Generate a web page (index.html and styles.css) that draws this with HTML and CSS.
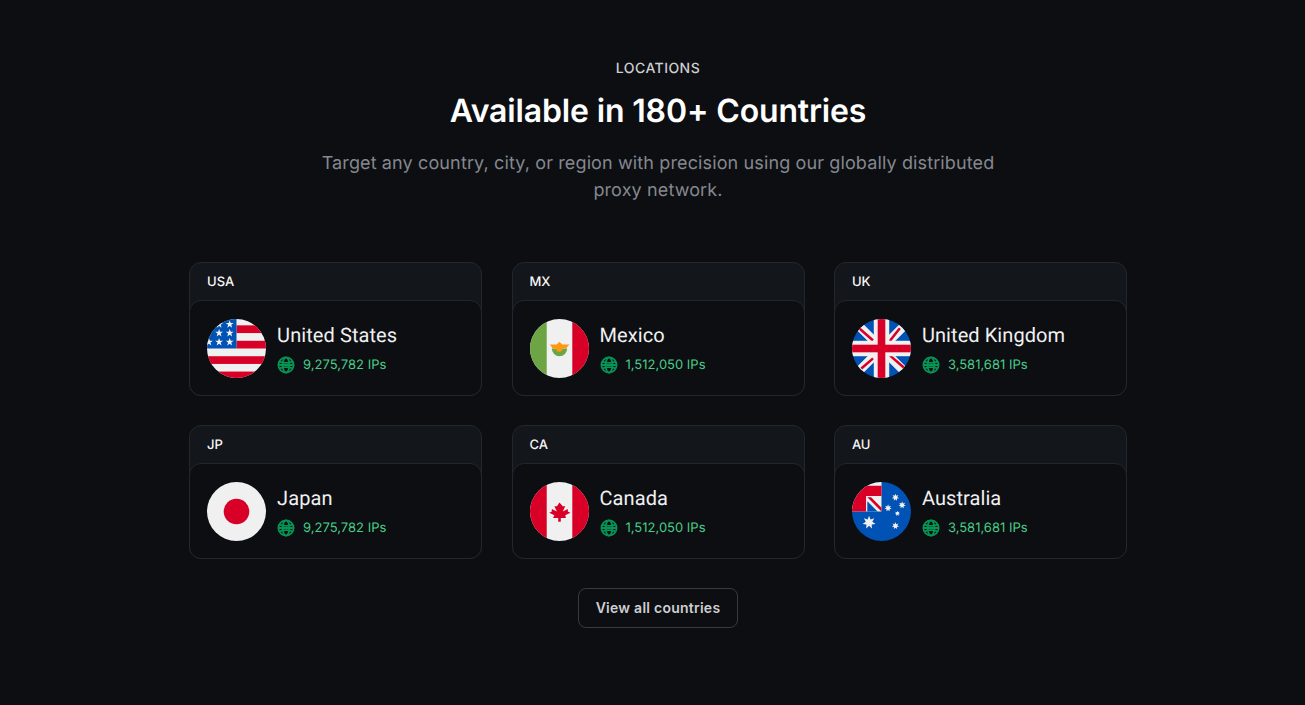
FILE: index.html
```html
<!DOCTYPE html>
<html lang="en">
<head>
  <meta charset="UTF-8">
  <meta name="viewport" content="width=device-width, initial-scale=1.0">
  <title>Locations</title>
  <link rel="stylesheet" href="styles.css">
</head>
<body>
  <!-- shared shapes -->
  <svg class="defs" width="0" height="0" aria-hidden="true">
    <defs>
      <symbol id="globe" viewBox="0 0 18 18">
        <circle cx="9" cy="9" r="7.6"/>
        <ellipse cx="9" cy="9" rx="3.4" ry="7.6"/>
        <path d="M2.4 5.6c4 1.5 9.2 1.5 13.2 0M2.4 12.4c4-1.5 9.2-1.5 13.2 0M1.4 9h15.2"/>
      </symbol>
      <polygon id="star5" points="0,-100 24,-32 95,-31 38,12 59,81 0,40 -59,81 -38,12 -95,-31 -24,-32" fill="#f0f0f0"/>
      <polygon id="star7" points="0,-100 21.7,-45 78.2,-62.3 48.7,-11.1 97.5,22.3 39.1,31.2 43.4,90.1 0,50 -43.4,90.1 -39.1,31.2 -97.5,22.3 -48.7,-11.1 -78.2,-62.3 -21.7,-45" fill="#f0f0f0"/>
    </defs>
  </svg>

  <section class="locations">
    <p class="eyebrow">LOCATIONS</p>
    <h1>Available in 180+ Countries</h1>
    <p class="lead">Target any country, city, or region with precision using our globally distributed proxy network.</p>

    <div class="cards">
      <div class="card">
        <div class="card-code">USA</div>
        <div class="card-body">
          <svg class="flag" viewBox="0 0 512 512">
            <rect width="512" height="512" fill="#f0f0f0"/>
            <g fill="#d80027">
              <rect x="256" y="55" width="256" height="67"/>
              <rect x="256" y="189" width="256" height="67"/>
              <rect y="323" width="512" height="67"/>
              <rect y="456" width="512" height="56"/>
            </g>
            <rect width="256" height="256" fill="#0052b4"/>
            <use href="#star5" transform="translate(197 46) scale(.36)"/>
            <use href="#star5" transform="translate(105 46) scale(.36)"/>
            <use href="#star5" transform="translate(197 122) scale(.36)"/>
            <use href="#star5" transform="translate(105 122) scale(.36)"/>
            <use href="#star5" transform="translate(197 200) scale(.36)"/>
            <use href="#star5" transform="translate(105 200) scale(.36)"/>
            <use href="#star5" transform="translate(17 200) scale(.36)"/>
          </svg>
          <div class="card-info">
            <div class="country">United States</div>
            <div class="ips"><svg class="globe"><use href="#globe"/></svg>9,275,782 IPs</div>
          </div>
        </div>
      </div>

      <div class="card">
        <div class="card-code">MX</div>
        <div class="card-body">
          <svg class="flag" viewBox="0 0 512 512">
            <rect width="512" height="512" fill="#f0f0f0"/>
            <rect width="145" height="512" fill="#6da544"/>
            <rect x="367" width="145" height="512" fill="#d80027"/>
            <path d="M189 256a67 67 0 0 0 134 0z" fill="#6da544"/>
            <path d="M174 222h58l24-25 24 25h62l-30 34h-30a22 22 0 0 1-56 0h-30z" fill="#ff9811"/>
          </svg>
          <div class="card-info">
            <div class="country">Mexico</div>
            <div class="ips"><svg class="globe"><use href="#globe"/></svg>1,512,050 IPs</div>
          </div>
        </div>
      </div>

      <div class="card">
        <div class="card-code">UK</div>
        <div class="card-body">
          <svg class="flag" viewBox="0 0 512 512">
            <rect width="512" height="512" fill="#0052b4"/>
            <path d="M0 0l512 512M512 0L0 512" stroke="#f0f0f0" stroke-width="76"/>
            <path d="M67 84l116 102M328 191l87-110M81 429l102-87M328 316l124 107" stroke="#d80027" stroke-width="22"/>
            <rect x="189" width="134" height="512" fill="#f0f0f0"/>
            <rect y="189" width="512" height="134" fill="#f0f0f0"/>
            <rect x="223" width="66" height="512" fill="#d80027"/>
            <rect y="223" width="512" height="66" fill="#d80027"/>
          </svg>
          <div class="card-info">
            <div class="country">United Kingdom</div>
            <div class="ips"><svg class="globe"><use href="#globe"/></svg>3,581,681 IPs</div>
          </div>
        </div>
      </div>

      <div class="card">
        <div class="card-code">JP</div>
        <div class="card-body">
          <svg class="flag" viewBox="0 0 512 512">
            <rect width="512" height="512" fill="#f0f0f0"/>
            <circle cx="256" cy="256" r="111" fill="#d80027"/>
          </svg>
          <div class="card-info">
            <div class="country">Japan</div>
            <div class="ips"><svg class="globe"><use href="#globe"/></svg>9,275,782 IPs</div>
          </div>
        </div>
      </div>

      <div class="card">
        <div class="card-code">CA</div>
        <div class="card-body">
          <svg class="flag" viewBox="0 0 512 512">
            <rect width="512" height="512" fill="#f0f0f0"/>
            <rect width="145" height="512" fill="#d80027"/>
            <rect x="367" width="145" height="512" fill="#d80027"/>
            <path d="M306.1 289.4l44.5-22.3-22.2-11.1v-22.3l-44.5 22.3 22.2-44.5h-22.2L256 178.1l-22.3 33.4h-22.2l22.2 44.5-44.5-22.3V256l-22.2 11.1 44.5 22.3-11.1 22.2h44.5v33.4h22.3v-33.4h44.5z" fill="#d80027"/>
          </svg>
          <div class="card-info">
            <div class="country">Canada</div>
            <div class="ips"><svg class="globe"><use href="#globe"/></svg>1,512,050 IPs</div>
          </div>
        </div>
      </div>

      <div class="card">
        <div class="card-code">AU</div>
        <div class="card-body">
          <svg class="flag" viewBox="0 0 512 512">
            <rect width="512" height="512" fill="#0052b4"/>
            <rect width="256" height="256" fill="#f0f0f0"/>
            <path d="M0 33h256v89H122v134H0z" fill="#d80027"/>
            <path d="M133 167l89 89h-89z" fill="#0052b4"/>
            <path d="M133 133h33l90 90v33z" fill="#d80027"/>
            <use href="#star7" transform="translate(148 351) scale(.58)"/>
            <use href="#star7" transform="translate(377 133) scale(.32)"/>
            <use href="#star7" transform="translate(313 226) scale(.32)"/>
            <use href="#star7" transform="translate(435 200) scale(.32)"/>
            <use href="#star7" transform="translate(394 273) scale(.24)"/>
            <use href="#star7" transform="translate(377 380) scale(.32)"/>
          </svg>
          <div class="card-info">
            <div class="country">Australia</div>
            <div class="ips"><svg class="globe"><use href="#globe"/></svg>3,581,681 IPs</div>
          </div>
        </div>
      </div>
    </div>

    <button class="view-all">View all countries</button>
  </section>
</body>
</html>
```

FILE: styles.css
```css
body {
  margin: 0;
  background-color: #0c0e12;
  font-family: Inter, "Liberation Sans", sans-serif;
  color: #fff;
  text-rendering: geometricPrecision;
}
.defs {
  position: absolute;
}
.locations {
  display: flex;
  flex-direction: column;
  align-items: center;
  height: 705px;
  box-sizing: border-box;
  padding: 59px 0 0 11px;
}
.eyebrow {
  margin: 0;
  font-size: 14px;
  line-height: 20px;
  font-weight: 500;
  letter-spacing: .45px;
  color: #cecfd2;
}
h1 {
  margin: 12px 0 0;
  font-size: 32px;
  line-height: 40px;
  font-weight: 600;
  letter-spacing: -.15px;
  color: #fff;
}
.lead {
  width: 700px;
  margin: 19px 0 0;
  font-size: 18px;
  line-height: 27px;
  letter-spacing: .125px;
  text-align: center;
  color: #85888e;
}
.cards {
  display: grid;
  grid-template-columns: repeat(3, 293px);
  gap: 29px 29.4px;
  margin-top: 58px;
}
.card {
  background-color: #13161b;
  border: 1px solid #22262f;
  border-radius: 12px;
}
.card-code {
  height: 37px;
  padding-left: 17px;
  font-size: 13px;
  line-height: 39px;
  font-weight: 500;
  color: #f7f7f7;
}
.card-body {
  display: flex;
  align-items: center;
  gap: 11px;
  margin: 0 -1px -1px;
  padding: 18px 18px 17px 17px;
  background-color: #0c0e12;
  border: 1px solid #22262f;
  border-radius: 12px;
}
.flag {
  display: block;
  flex: none;
  width: 59px;
  height: 59px;
  border-radius: 50%;
}
.country {
  font-family: Roboto, sans-serif;
  font-size: 20px;
  line-height: 28px;
  letter-spacing: .08px;
  color: #f0f0f1;
  margin-top: -3px;
}
.ips {
  display: flex;
  align-items: center;
  gap: 8px;
  margin-top: 7px;
  font-size: 13px;
  line-height: 18px;
  color: #47cd89;
}
.globe {
  width: 18px;
  height: 18px;
  fill: none;
  stroke: #079455;
  stroke-width: 1.8;
}
.view-all {
  width: 160px;
  height: 40px;
  margin-top: 29px;
  padding: 0 0 2px;
  background-color: #0c0e12;
  border: 1px solid #373a41;
  border-radius: 8px;
  font-family: Inter, "Liberation Sans", sans-serif;
  font-size: 14px;
  font-weight: 600;
  letter-spacing: .25px;
  color: #cecfd2;
}
```
